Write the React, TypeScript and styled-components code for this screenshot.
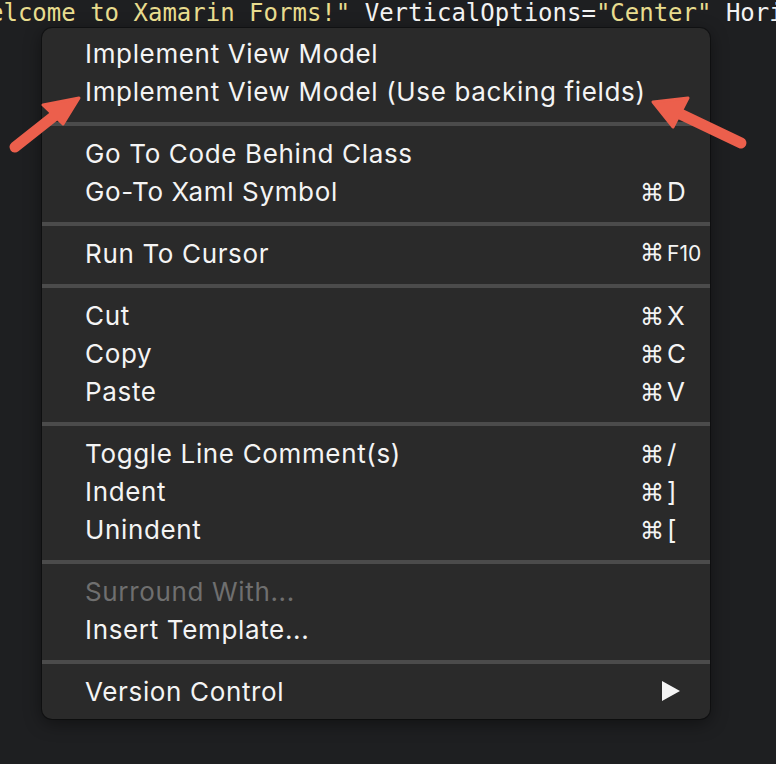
import styled, { createGlobalStyle } from "styled-components";

const GlobalStyle = createGlobalStyle`
  html, body {
    margin: 0;
    padding: 0;
    background: #1e1f21;
  }
  #root {
    width: 776px;
    height: 764px;
    overflow: hidden;
  }
`;

const Page = styled.div`
  position: relative;
  width: 776px;
  height: 764px;
  background: #1e1f21;
  overflow: hidden;
`;

const CodeLine = styled.div`
  font-family: "DejaVu Sans Mono", "Liberation Mono", monospace;
  font-size: 24px;
  line-height: 26px;
  height: 26px;
  white-space: nowrap;
  margin-left: -11px;
  color: #f2f2f2;
`;

const Str = styled.span`
  color: #e8dc8e;
`;

const Menu = styled.div`
  margin-left: 42px;
  margin-top: 2px;
  width: 668px;
  box-sizing: border-box;
  padding: 6px 0 9px;
  background: #2a2a2a;
  border-radius: 10px;
  box-shadow: 0 4px 18px rgba(0, 0, 0, 0.45), 0 0 0 1px rgba(0, 0, 0, 0.35);
  font-family: Inter, "Noto Sans", sans-serif;
`;

const Row = styled.div<{ $disabled?: boolean }>`
  display: grid;
  grid-template-columns: minmax(0, 1fr) 70px;
  align-items: center;
  height: 38px;
  padding-left: 43px;
  font-size: 26px;
  letter-spacing: 0.65px;
  color: ${(p) => (p.$disabled ? "#6f6f6f" : "#f4f4f4")};
`;

const Label = styled.span`
  white-space: nowrap;
`;

const Shortcut = styled.span`
  display: flex;
  align-items: baseline;
  font-size: 26px;
  letter-spacing: 0;
`;

const Cmd = styled.span`
  font-family: "DejaVu Sans", sans-serif;
  font-size: 24px;
  margin-right: 3px;
`;

const Small = styled.span`
  font-size: 21px;
`;

const Separator = styled.div`
  height: 24px;
  box-sizing: border-box;
  padding: 12px 0 8px;
  &::after {
    content: "";
    display: block;
    width: 100%;
    height: 4px;
    background: #4b4b4b;
  }
`;

const SubArrow = styled.span`
  display: block;
  width: 0;
  height: 0;
  margin-left: 22px;
  border-top: 10px solid transparent;
  border-bottom: 10px solid transparent;
  border-left: 18px solid #f4f4f4;
`;

const Arrows = styled.svg`
  position: absolute;
  left: 0;
  top: 0;
  pointer-events: none;
`;

type Item =
  | { kind: "sep" }
  | { kind: "item"; label: string; key?: string; small?: boolean; disabled?: boolean; sub?: boolean };

const items: Item[] = [
  { kind: "item", label: "Implement View Model" },
  { kind: "item", label: "Implement View Model (Use backing fields)" },
  { kind: "sep" },
  { kind: "item", label: "Go To Code Behind Class" },
  { kind: "item", label: "Go-To Xaml Symbol", key: "D" },
  { kind: "sep" },
  { kind: "item", label: "Run To Cursor", key: "F10", small: true },
  { kind: "sep" },
  { kind: "item", label: "Cut", key: "X" },
  { kind: "item", label: "Copy", key: "C" },
  { kind: "item", label: "Paste", key: "V" },
  { kind: "sep" },
  { kind: "item", label: "Toggle Line Comment(s)", key: "/" },
  { kind: "item", label: "Indent", key: "]" },
  { kind: "item", label: "Unindent", key: "[" },
  { kind: "sep" },
  { kind: "item", label: "Surround With...", disabled: true },
  { kind: "item", label: "Insert Template..." },
  { kind: "sep" },
  { kind: "item", label: "Version Control", sub: true },
];

function App() {
  return (
    <Page>
      <GlobalStyle />
      <CodeLine>
        <Str>{'elcome to Xamarin Forms!"'}</Str> VerticalOptions=<Str>"Center"</Str> Hori
      </CodeLine>
      <Menu>
        {items.map((it, i) =>
          it.kind === "sep" ? (
            <Separator key={i} />
          ) : (
            <Row key={i} $disabled={it.disabled}>
              <Label>{it.label}</Label>
              {it.sub ? (
                <SubArrow />
              ) : it.key ? (
                <Shortcut>
                  <Cmd>⌘</Cmd>
                  {it.small ? <Small>{it.key}</Small> : it.key}
                </Shortcut>
              ) : (
                <span />
              )}
            </Row>
          )
        )}
      </Menu>
      <Arrows width="776" height="764" viewBox="0 0 776 764">
        <g fill="#ec5f4c" stroke="#ec5f4c" strokeLinecap="round" strokeLinejoin="round">
          <line x1="15" y1="147" x2="58" y2="113" strokeWidth="11" />
          <polygon points="79,98 43,105 63,124" strokeWidth="3" />
          <line x1="741" y1="143" x2="676" y2="112" strokeWidth="11" />
          <polygon points="653,102 688,98 673,127" strokeWidth="3" />
        </g>
      </Arrows>
    </Page>
  );
}

export default App;
